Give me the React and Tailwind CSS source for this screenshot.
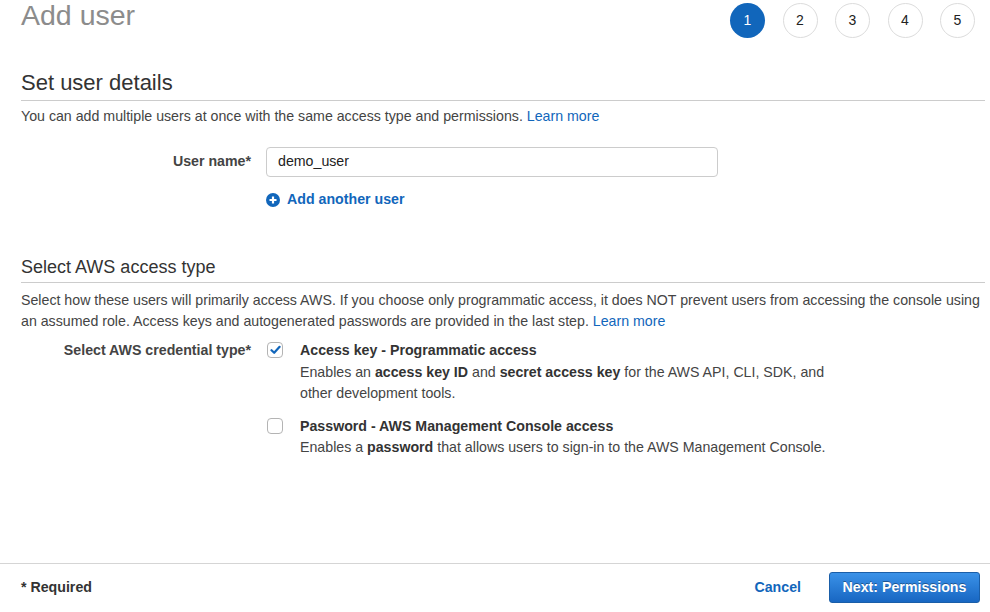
import React from "react";

const steps = [1, 2, 3, 4, 5];

const Checkbox = ({ checked }) => (
    <div className="w-[16px] h-[16px] mt-[2px] rounded-[4px] border border-[#b4b4b4] bg-white flex items-center justify-center shrink-0">
        {checked && (
            <svg width="11" height="10" viewBox="0 0 11 10">
                <path
                    d="M1.5 5.2 L4.2 7.8 L9.6 1.8"
                    fill="none"
                    stroke="#1166bb"
                    strokeWidth="2.2"
                    strokeLinecap="round"
                    strokeLinejoin="round"
                />
            </svg>
        )}
    </div>
);

const App = () => {
    return (
        <div className="w-[990px] h-[612px] bg-white flex flex-col overflow-hidden font-['Liberation_Sans',Arial,sans-serif] text-[14.2px] text-[#444]">
            <main className="flex-1 pl-[21px] pr-[5px]">
                <div className="flex items-start justify-between h-[43px]">
                    <h1 className="text-[28.5px] leading-[30px] text-[#8c8c8c]">
                        Add user
                    </h1>
                    <div className="flex gap-[17.5px] mt-[3px] mr-[10px]">
                        {steps.map((s) =>
                            s === 1 ? (
                                <div
                                    key={s}
                                    className="w-[35px] h-[35px] rounded-full bg-[#1166bb] text-white flex items-center justify-center text-[14px]"
                                >
                                    {s}
                                </div>
                            ) : (
                                <div
                                    key={s}
                                    className="w-[35px] h-[35px] rounded-full border border-[#dcdcdc] text-[#222] flex items-center justify-center text-[14px]"
                                >
                                    {s}
                                </div>
                            )
                        )}
                    </div>
                </div>

                <h2 className="mt-[27px] text-[22px] leading-[26px] text-[#333] pb-[4px] border-b border-[#cccccc]">
                    Set user details
                </h2>
                <p className="mt-[5px] leading-[21px]">
                    You can add multiple users at once with the same access type
                    and permissions.{" "}
                    <span className="text-[#1166bb]">Learn more</span>
                </p>

                <div className="flex items-center mt-[20px]">
                    <label className="w-[230px] text-right font-bold">
                        User name*
                    </label>
                    <div className="ml-[15px] w-[452px] h-[30px] border border-[#cccccc] rounded-[4px] px-[11px] flex items-center text-[#222]">
                        demo_user
                    </div>
                </div>

                <div className="flex items-center gap-[7px] mt-[12px] ml-[245px] leading-[21px] font-bold text-[#1166bb]">
                    <svg width="14" height="14" viewBox="0 0 14 14">
                        <circle cx="7" cy="7" r="7" fill="#1166bb" />
                        <path
                            d="M7 3.5 V10.5 M3.5 7 H10.5"
                            stroke="#fff"
                            strokeWidth="2.2"
                        />
                    </svg>
                    <span>Add another user</span>
                </div>

                <h2 className="mt-[46px] text-[18px] leading-[22px] text-[#333] pb-[4px] border-b border-[#cccccc]">
                    Select AWS access type
                </h2>
                <p className="mt-[7px] leading-[21px]">
                    Select how these users will primarily access AWS. If you
                    choose only programmatic access, it does NOT prevent users
                    from accessing the console using an assumed role. Access keys
                    and autogenerated passwords are provided in the last step.{" "}
                    <span className="text-[#1166bb]">Learn more</span>
                </p>

                <div className="flex mt-[8px] leading-[21.5px]">
                    <label className="w-[230px] text-right font-bold">
                        Select AWS credential type*
                    </label>
                    <div className="ml-[16px] flex flex-col gap-[11px]">
                        <div className="flex gap-[17px]">
                            <Checkbox checked />
                            <div>
                                <div className="font-bold text-[#333]">
                                    Access key - Programmatic access
                                </div>
                                <div className="w-[540px]">
                                    Enables an{" "}
                                    <b className="text-[#333]">access key ID</b>{" "}
                                    and{" "}
                                    <b className="text-[#333]">
                                        secret access key
                                    </b>{" "}
                                    for the AWS API, CLI, SDK, and other
                                    development tools.
                                </div>
                            </div>
                        </div>
                        <div className="flex gap-[17px]">
                            <Checkbox />
                            <div>
                                <div className="font-bold text-[#333]">
                                    Password - AWS Management Console access
                                </div>
                                <div className="whitespace-nowrap">
                                    Enables a{" "}
                                    <b className="text-[#333]">password</b> that
                                    allows users to sign-in to the AWS
                                    Management Console.
                                </div>
                            </div>
                        </div>
                    </div>
                </div>
            </main>

            <footer className="h-[49px] border-t border-[#d5d5d5] pt-[8px] pl-[21px] pr-[10px] flex items-start justify-between">
                <div className="h-[31px] flex items-center font-bold text-[#333]">
                    * Required
                </div>
                <div className="flex items-center gap-[28px] h-[31px]">
                    <span className="font-bold text-[#1166bb]">Cancel</span>
                    <button className="w-[151px] h-[31px] rounded-[3px] border border-[#1a5ea8] bg-gradient-to-b from-[#3a92e8] to-[#1866c2] text-white font-bold text-[14.2px] [text-shadow:0_-1px_0_rgba(0,0,0,0.35)]">
                        Next: Permissions
                    </button>
                </div>
            </footer>
        </div>
    );
};

export default App;
